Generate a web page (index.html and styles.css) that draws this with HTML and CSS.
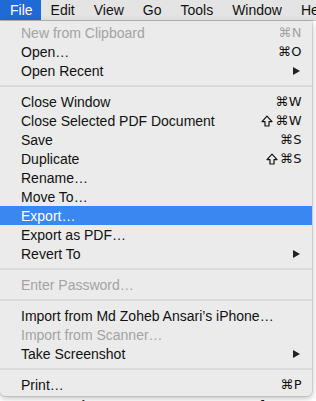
FILE: index.html
```html
<!DOCTYPE html>
<html>
<head>
<meta charset="utf-8">
<link rel="stylesheet" href="styles.css">
</head>
<body>
<div class="screen">
  <div class="menubar">
    <span class="mb-item active">File</span>
    <span class="mb-item">Edit</span>
    <span class="mb-item">View</span>
    <span class="mb-item">Go</span>
    <span class="mb-item">Tools</span>
    <span class="mb-item">Window</span>
    <span class="mb-item">Help</span>
  </div>
  <div class="doc">
    <div class="doc-text">primary reason many people use</div>
  </div>
  <div class="menu">
    <div class="row disabled"><span>New from Clipboard</span><span class="key">⌘N</span></div>
    <div class="row"><span>Open…</span><span class="key">⌘O</span></div>
    <div class="row"><span>Open Recent</span><span class="arrow"></span></div>
    <div class="sep"></div>
    <div class="row"><span>Close Window</span><span class="key">⌘W</span></div>
    <div class="row"><span>Close Selected PDF Document</span><span class="key"><svg class="shift" viewBox="0 0 12 12" width="12" height="12"><path d="M6 1.2 L11 6.6 H8 V11 H4 V6.6 H1 Z" fill="none" stroke="#111" stroke-width="1.2" stroke-linejoin="round"/></svg>⌘W</span></div>
    <div class="row"><span>Save</span><span class="key">⌘S</span></div>
    <div class="row"><span>Duplicate</span><span class="key"><svg class="shift" viewBox="0 0 12 12" width="12" height="12"><path d="M6 1.2 L11 6.6 H8 V11 H4 V6.6 H1 Z" fill="none" stroke="#111" stroke-width="1.2" stroke-linejoin="round"/></svg>⌘S</span></div>
    <div class="row"><span>Rename…</span></div>
    <div class="row"><span>Move To…</span></div>
    <div class="row selected"><span>Export…</span></div>
    <div class="row"><span>Export as PDF…</span></div>
    <div class="row"><span>Revert To</span><span class="arrow"></span></div>
    <div class="sep"></div>
    <div class="row disabled"><span>Enter Password…</span></div>
    <div class="sep"></div>
    <div class="row"><span>Import from Md Zoheb Ansari’s iPhone…</span></div>
    <div class="row disabled"><span>Import from Scanner…</span></div>
    <div class="row"><span>Take Screenshot</span><span class="arrow"></span></div>
    <div class="sep"></div>
    <div class="row"><span>Print…</span><span class="key">⌘P</span></div>
  </div>
</div>
</body>
</html>
```

FILE: styles.css
```css
html, body {
  margin: 0;
  padding: 0;
  background: #ffffff;
}
.screen {
  position: relative;
  width: 316px;
  height: 401px;
  overflow: hidden;
  font-family: "Liberation Sans", Arial, sans-serif;
  color: #111;
}
.menubar {
  height: 20px;
  background: #e4e4e4;
  border-bottom: 1px solid #c8c8c8;
  display: flex;
  align-items: center;
  white-space: nowrap;
  font-size: 14px;
}
.mb-item {
  height: 20px;
  line-height: 20px;
  padding: 0 9px 0 10px;
}
.mb-item.active {
  background: #1f6ad4;
  color: #fff;
  padding: 0 8px 0 10px;
}
.doc {
  height: 380px;
  position: relative;
}
.doc-text {
  position: absolute;
  left: 64px;
  top: 376px;
  font-family: "Liberation Serif", serif;
  font-weight: bold;
  font-size: 17px;
  color: #111;
  white-space: nowrap;
}
.menu {
  position: absolute;
  left: 0;
  top: 21px;
  width: 312px;
  box-sizing: border-box;
  padding: 2px 0 2px;
  background: #ebebeb;
  border-radius: 0 0 5px 5px;
  box-shadow: 0 2px 6px rgba(0,0,0,0.28), 0 0 0 1px rgba(0,0,0,0.08);
  font-size: 14px;
}
.row {
  height: 19px;
  display: flex;
  align-items: center;
  justify-content: space-between;
  padding: 0 10px 0 21px;
  white-space: nowrap;
}
.row.disabled {
  color: #a3a3a3;
}
.row.selected {
  background: #3a87f2;
  color: #fff;
}
.key {
  display: flex;
  align-items: center;
  gap: 2px;
  font-family: "DejaVu Sans", "Liberation Sans", sans-serif;
  font-size: 13px;
  letter-spacing: 0.5px;
}
.shift {
  display: block;
}
.arrow {
  width: 0;
  height: 0;
  border-top: 4.5px solid transparent;
  border-bottom: 4.5px solid transparent;
  border-left: 7px solid #222;
  margin-right: 2px;
}
.sep {
  height: 12px;
  display: flex;
  align-items: center;
}
.sep::before {
  content: "";
  display: block;
  width: 100%;
  height: 2px;
  background: #dadada;
}
```
